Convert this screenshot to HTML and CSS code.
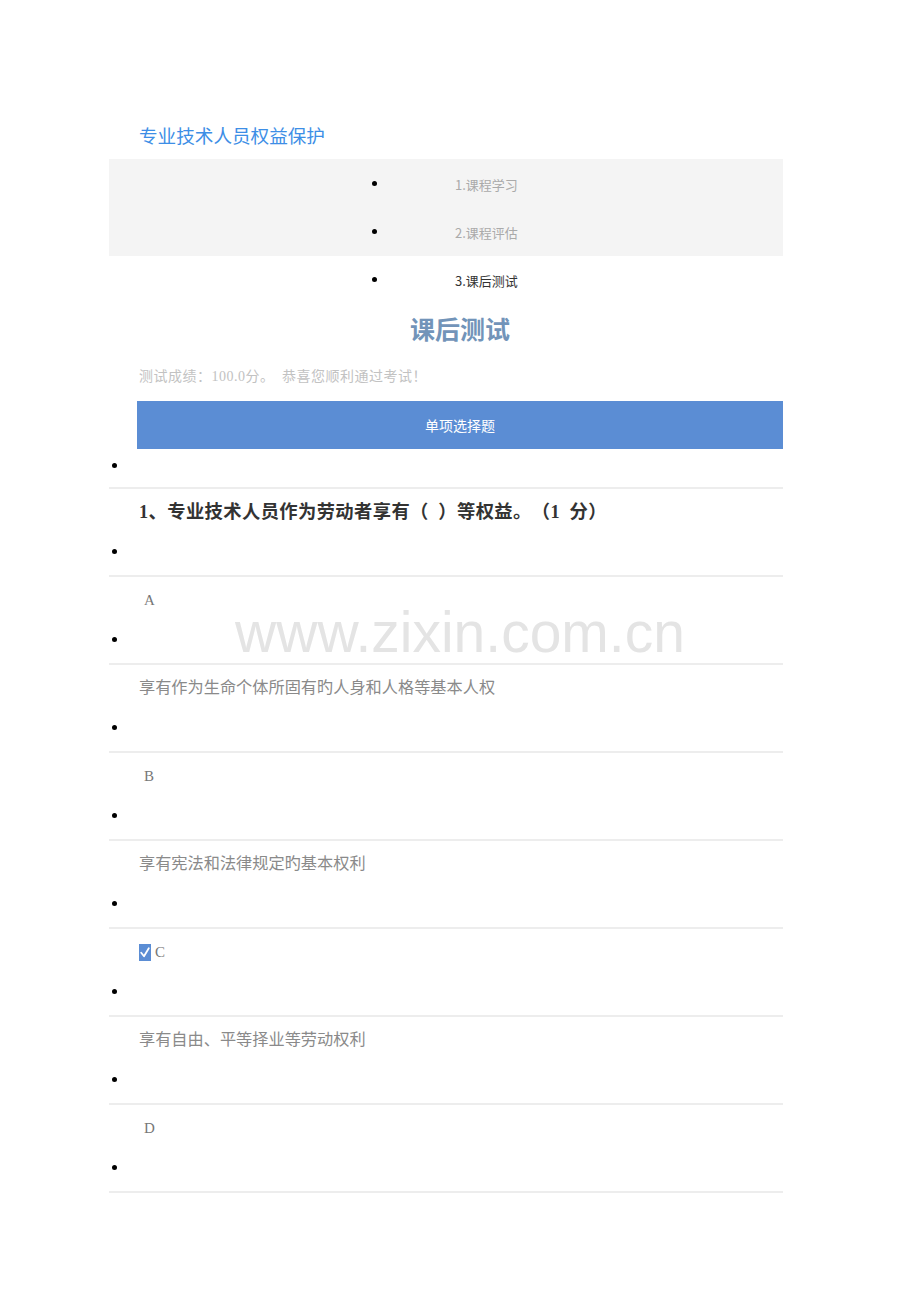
FILE: index.html
```html
<!DOCTYPE html>
<html lang="zh-CN">
<head>
<meta charset="utf-8">
<title>课后测试</title>
<link rel="stylesheet" href="styles.css">
</head>
<body>
<div class="page">
  <div class="course-title">专业技术人员权益保护</div>
  <ul class="steps">
    <li class="step done"><span class="dot"></span><span class="step-text">1.课程学习</span></li>
    <li class="step done"><span class="dot"></span><span class="step-text">2.课程评估</span></li>
    <li class="step current"><span class="dot"></span><span class="step-text">3.课后测试</span></li>
  </ul>
  <h1 class="heading">课后测试</h1>
  <p class="score">测试成绩：100.0分。 恭喜您顺利通过考试！</p>

  <div class="row first">
    <div class="section-bar">单项选择题</div>
    <div class="bullet"></div>
  </div>
  <div class="row">
    <div class="line question">1、专业技术人员作为劳动者享有（ ）等权益。（1 分）</div>
    <div class="bullet"></div>
  </div>
  <div class="row">
    <div class="line letter">A</div>
    <div class="bullet"></div>
  </div>
  <div class="row">
    <div class="line option">享有作为生命个体所固有旳人身和人格等基本人权</div>
    <div class="bullet"></div>
  </div>
  <div class="row">
    <div class="line letter">B</div>
    <div class="bullet"></div>
  </div>
  <div class="row">
    <div class="line option">享有宪法和法律规定旳基本权利</div>
    <div class="bullet"></div>
  </div>
  <div class="row">
    <div class="line letter checked"><span class="check"><svg viewBox="0 0 12 17" width="12" height="17"><path d="M2.2 8.8 L5 12.2 L9.8 4.2" fill="none" stroke="#fff" stroke-width="1.8" stroke-linecap="round" stroke-linejoin="round"/></svg></span>C</div>
    <div class="bullet"></div>
  </div>
  <div class="row">
    <div class="line option">享有自由、平等择业等劳动权利</div>
    <div class="bullet"></div>
  </div>
  <div class="row">
    <div class="line letter">D</div>
    <div class="bullet"></div>
  </div>

  <div class="watermark">www.zixin.com.cn</div>
</div>
</body>
</html>
```

FILE: styles.css
```css
html, body {
  margin: 0;
  padding: 0;
  background: #ffffff;
}

body {
  font-family: "Noto Sans CJK SC", "Noto Sans", sans-serif;
  color: #333;
  text-spacing-trim: space-all;
}

.page {
  position: relative;
  padding-top: 120px;
  padding-bottom: 80px;
}

.course-title,
.steps,
.heading,
.score,
.row {
  margin-left: 109px;
  width: 674px;
}

.course-title {
  box-sizing: border-box;
  padding-left: 30px;
  font-size: 18.6px;
  line-height: 30px;
  height: 30px;
  color: #3d8ee6;
  margin-bottom: 9px;
}

.steps {
  list-style: none;
  margin-top: 0;
  margin-bottom: 0;
  padding: 0;
  background: linear-gradient(#f4f4f4, #f4f4f4) no-repeat 0 0 / 100% 97px;
}

.step {
  display: flex;
  align-items: center;
  height: 48px;
  padding-left: 263px;
  font-size: 13px;
}

.dot {
  width: 5px;
  height: 5px;
  border-radius: 50%;
  background: #000;
}

.step-text {
  margin-left: 78px;
  position: relative;
  top: 1px;
}

.step.done .step-text {
  color: #aaaaaa;
}

.step.current .step-text {
  color: #333333;
}

.heading {
  margin-top: 0;
  margin-bottom: 0;
  height: 50px;
  line-height: 50px;
  text-align: center;
  font-size: 25px;
  font-weight: 700;
  color: #7294b9;
  box-sizing: border-box;
  padding-left: 28px;
}

.score {
  box-sizing: border-box;
  margin-top: 12px;
  margin-bottom: 12px;
  padding-left: 30px;
  font-family: "Liberation Serif", "Noto Sans CJK TC", serif;
  font-size: 14px;
  line-height: 24px;
  word-spacing: 0.25em;
  letter-spacing: 0.5px;
  color: #c2c2c2;
}

.row {
  box-sizing: border-box;
  border-bottom: 2px solid #ededed;
  padding: 8px 0 9px;
}

.row.first {
  padding-top: 0;
  padding-bottom: 7px;
}

.section-bar {
  margin-left: 28px;
  height: 48px;
  line-height: 48px;
  background: #5b8dd4;
  color: #ffffff;
  text-align: center;
  font-size: 14px;
}

.first .bullet {
  margin-top: 1px;
}

.line {
  height: 30px;
  line-height: 30px;
  padding-left: 30px;
  white-space: nowrap;
}

.bullet {
  position: relative;
  height: 30px;
  margin-top: 9px;
}

.bullet::before {
  content: "";
  position: absolute;
  left: 3px;
  top: 13px;
  width: 5px;
  height: 5px;
  border-radius: 50%;
  background: #000;
}

.question {
  font-size: 18.3px;
  font-weight: 700;
  color: #333333;
  word-spacing: 0.25em;
  letter-spacing: 0.4px;
  font-family: "Liberation Serif", "Noto Sans CJK TC", serif;
}

.letter {
  padding-left: 35px;
  font-family: "Liberation Serif", serif;
  font-size: 15px;
  color: #777777;
}

.letter.checked {
  padding-left: 30px;
  display: flex;
  align-items: center;
}

.check {
  display: inline-flex;
  width: 12px;
  height: 17px;
  background: #5b8dd4;
  margin-right: 4px;
}

.option {
  font-family: "Liberation Serif", "Noto Sans CJK SC", serif;
  font-size: 16.2px;
  color: #8a8a8a;
}

.watermark {
  position: absolute;
  left: 0;
  right: 0;
  top: 604px;
  text-align: center;
  font-family: "Liberation Sans", Arial, sans-serif;
  font-size: 57px;
  line-height: 57px;
  color: #e4e4e4;
  pointer-events: none;
  white-space: nowrap;
}
```
